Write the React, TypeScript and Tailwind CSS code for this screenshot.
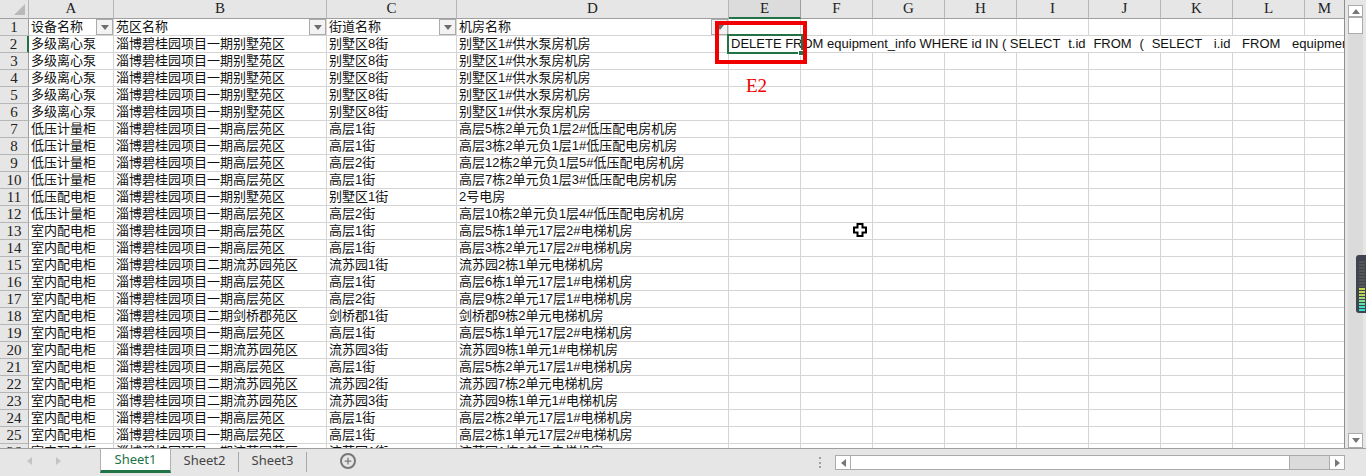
import { Plus } from "lucide-react";

const ONE = "淄博碧桂园项目一期";
const TWO = "淄博碧桂园项目二期";

// 每行: 设备, 苑区, 街道, 机房
const rows: [string, string, string, string][] = [
  ["设备名称", "苑区名称", "街道名称", "机房名称"],
  ["多级离心泵", ONE + "别墅苑区", "别墅区8街", "别墅区1#供水泵房机房"],
  ["多级离心泵", ONE + "别墅苑区", "别墅区8街", "别墅区1#供水泵房机房"],
  ["多级离心泵", ONE + "别墅苑区", "别墅区8街", "别墅区1#供水泵房机房"],
  ["多级离心泵", ONE + "别墅苑区", "别墅区8街", "别墅区1#供水泵房机房"],
  ["多级离心泵", ONE + "别墅苑区", "别墅区8街", "别墅区1#供水泵房机房"],
  ["低压计量柜", ONE + "高层苑区", "高层1街", "高层5栋2单元负1层2#低压配电房机房"],
  ["低压计量柜", ONE + "高层苑区", "高层1街", "高层3栋2单元负1层1#低压配电房机房"],
  ["低压计量柜", ONE + "高层苑区", "高层2街", "高层12栋2单元负1层5#低压配电房机房"],
  ["低压计量柜", ONE + "高层苑区", "高层1街", "高层7栋2单元负1层3#低压配电房机房"],
  ["低压配电柜", ONE + "别墅苑区", "别墅区1街", "2号电房"],
  ["低压计量柜", ONE + "高层苑区", "高层2街", "高层10栋2单元负1层4#低压配电房机房"],
  ["室内配电柜", ONE + "高层苑区", "高层1街", "高层5栋1单元17层2#电梯机房"],
  ["室内配电柜", ONE + "高层苑区", "高层1街", "高层3栋2单元17层2#电梯机房"],
  ["室内配电柜", TWO + "流苏园苑区", "流苏园1街", "流苏园2栋1单元电梯机房"],
  ["室内配电柜", ONE + "高层苑区", "高层1街", "高层6栋1单元17层1#电梯机房"],
  ["室内配电柜", ONE + "高层苑区", "高层2街", "高层9栋2单元17层1#电梯机房"],
  ["室内配电柜", TWO + "剑桥郡苑区", "剑桥郡1街", "剑桥郡9栋2单元电梯机房"],
  ["室内配电柜", ONE + "高层苑区", "高层1街", "高层5栋1单元17层2#电梯机房"],
  ["室内配电柜", TWO + "流苏园苑区", "流苏园3街", "流苏园9栋1单元1#电梯机房"],
  ["室内配电柜", ONE + "高层苑区", "高层1街", "高层5栋2单元17层1#电梯机房"],
  ["室内配电柜", TWO + "流苏园苑区", "流苏园2街", "流苏园7栋2单元电梯机房"],
  ["室内配电柜", TWO + "流苏园苑区", "流苏园3街", "流苏园9栋1单元1#电梯机房"],
  ["室内配电柜", ONE + "高层苑区", "高层1街", "高层2栋2单元17层1#电梯机房"],
  ["室内配电柜", ONE + "高层苑区", "高层1街", "高层2栋1单元17层2#电梯机房"],
  ["室内配电柜", ONE + "流苏园苑区", "流苏园1街", "流苏园1栋2单元电梯机房"],
];

const SQL_HEAD = "DELETE FROM equipment_info WHERE id IN ( SELECT";
const SQL_TAIL = "  t.id  FROM  (  SELECT   i.id   FROM   equipment_info i";

const emptyCols = ["w-[72px]", "w-[72px]", "w-[72px]", "w-[72px]", "w-[72px]", "w-[72px]", "w-[72px]", "w-[72px]", "w-[40px]"];

const meterBars = [
  "bg-[#555]", "bg-[#555]", "bg-[#555]", "bg-[#555]", "bg-[#555]", "bg-[#555]", "bg-[#555]", "bg-[#555]", "bg-[#555]",
  "bg-[#c8d84c]", "bg-[#c8d84c]", "bg-[#b4dc5a]", "bg-[#a0e070]", "bg-[#80e090]", "bg-[#60e0a8]", "bg-[#40e0c0]", "bg-[#30e0d0]",
];

function Triangle({ dir, className }: { dir: "up" | "down" | "left" | "right"; className?: string }) {
  const pts = { up: "0,5 8,5 4,0", down: "0,0 8,0 4,5", left: "5,0 5,8 0,4", right: "0,0 0,8 5,4" }[dir];
  const size = dir === "up" || dir === "down" ? { width: 8, height: 5 } : { width: 5, height: 8 };
  return (
    <svg {...size} className={className}>
      <polygon points={pts} fill="currentColor" />
    </svg>
  );
}

function ColHead({ label, className, active }: { label: string; className: string; active?: boolean }) {
  return (
    <div
      className={`flex h-[19px] shrink-0 items-center justify-center border-r pb-[1px] font-['Liberation_Serif'] text-[15px] text-[#222] ${className} ${
        active ? "border-b-2 border-r-[#9f9f9f] border-b-[#217346] bg-[#dcdcdc]" : "border-b border-r-[#b6b6b6] border-b-[#9f9f9f] bg-[#e6e6e6]"
      }`}
    >
      {label}
    </div>
  );
}

function Cell({ text, className, filter }: { text: string; className: string; filter?: boolean }) {
  return (
    <div className={`relative h-[17px] shrink-0 overflow-hidden whitespace-nowrap border-r border-b border-[#d4d4d4] pl-[2px] leading-[16px] ${className}`}>
      {text}
      {filter && (
        <div className="absolute right-0 top-0 flex h-[16px] w-[17px] items-center justify-center border border-[#ababab] bg-[#f3f3f3] text-[#6d6d6d]">
          <Triangle dir="down" />
        </div>
      )}
    </div>
  );
}

function Row({ index, data }: { index: number; data: [string, string, string, string] }) {
  const isHeader = index === 1;
  const isActive = index === 2;
  return (
    <div className="flex">
      <div
        className={`flex h-[17px] w-[29px] shrink-0 items-center justify-center border-b border-b-[#b6b6b6] bg-[#e6e6e6] font-['Liberation_Serif'] text-[15px] text-[#222] ${
          isActive ? "border-r-2 border-r-[#217346]" : "border-r border-r-[#9f9f9f]"
        }`}
      >
        {index}
      </div>
      <Cell text={data[0]} className="w-[85px]" filter={isHeader} />
      <Cell text={data[1]} className="w-[213px]" filter={isHeader} />
      <Cell text={data[2]} className="w-[130px]" filter={isHeader} />
      <Cell text={data[3]} className="w-[272px]" filter={isHeader} />
      {isActive ? (
        <div className="relative h-[17px] w-[616px] shrink-0 border-b border-[#d4d4d4]">
          {/* 溢出到右侧空单元格的 SQL */}
          <div className="absolute left-[2px] top-0 w-[614px] overflow-hidden whitespace-pre leading-[16px]">
            {SQL_HEAD}
            <span className="[word-spacing:0.3px]">{SQL_TAIL}</span>
          </div>
        </div>
      ) : (
        emptyCols.map((w, i) => (
          <div key={i} className={`h-[17px] shrink-0 border-b border-r border-[#d4d4d4] ${w}`} />
        ))
      )}
    </div>
  );
}

export default function App() {
  return (
    <div className="relative flex h-[476px] w-[1366px] flex-col overflow-hidden bg-[#e6e6e6] font-['Liberation_Sans','Noto_Sans_CJK_SC',sans-serif] text-[13px] text-[#111]">
      <div className="flex h-[449px] shrink-0 border-b border-[#9f9f9f]">
        {/* 表格 */}
        <div className="h-[448px] w-[1345px] shrink-0 overflow-hidden border-r border-[#8f8f8f] bg-white">
          <div className="flex">
            <div className="flex h-[19px] w-[29px] shrink-0 items-end justify-end border-r border-b border-r-[#b6b6b6] border-b-[#9f9f9f] bg-[#e6e6e6] pb-[3px] pr-[3px]">
              <svg width="11" height="11">
                <polygon points="11,0 11,11 0,11" fill="#b9b9b9" />
              </svg>
            </div>
            <ColHead label="A" className="w-[85px]" />
            <ColHead label="B" className="w-[213px]" />
            <ColHead label="C" className="w-[130px]" />
            <ColHead label="D" className="w-[272px]" />
            <ColHead label="E" className="w-[72px]" active />
            <ColHead label="F" className="w-[72px]" />
            <ColHead label="G" className="w-[72px]" />
            <ColHead label="H" className="w-[72px]" />
            <ColHead label="I" className="w-[72px]" />
            <ColHead label="J" className="w-[72px]" />
            <ColHead label="K" className="w-[72px]" />
            <ColHead label="L" className="w-[72px]" />
            <ColHead label="M" className="w-[40px]" />
          </div>
          {rows.map((r, i) => (
            <Row key={i} index={i + 1} data={r} />
          ))}
        </div>

        {/* 竖向滚动条 */}
        <div className="flex w-[21px] shrink-0 justify-center bg-[#e6e6e6] pt-[5px]">
          <div className="flex h-[443px] w-[15px] flex-col bg-[#dbdbdb]">
            <div className="flex h-[12px] items-center justify-center border border-[#ababab] bg-white text-[#777]">
              <Triangle dir="up" />
            </div>
            <div className="h-[17px] border border-[#ababab] bg-white" />
            <div className="flex-1" />
            <div className="flex h-[15px] items-center justify-center border border-[#ababab] bg-white text-[#777]">
              <Triangle dir="down" />
            </div>
          </div>
        </div>
      </div>

      {/* 工作表标签 */}
      <div className="flex h-[27px] items-start font-['Noto_Sans',sans-serif] text-[13px] text-[#444]">
        <div className="flex h-[24px] w-[100px] shrink-0 items-center gap-[24px] pl-[27px] text-[#c4c4c4]">
          <Triangle dir="left" />
          <Triangle dir="right" />
        </div>
        <div className="flex h-[24px] w-[71px] shrink-0 items-center justify-center border-x border-b-[3px] border-x-[#b0b0b0] border-b-[#217346] bg-white text-[#217346]">Sheet1</div>
        <div className="flex h-[24px] w-[67px] shrink-0 items-center justify-center">Sheet2</div>
        <div className="mt-[3px] h-[20px] w-px shrink-0 bg-[#a8a8a8]" />
        <div className="flex h-[24px] w-[67px] shrink-0 items-center justify-center">Sheet3</div>
        <div className="mt-[3px] h-[20px] w-px shrink-0 bg-[#a8a8a8]" />
        <div className="ml-[33px] mt-[4px] flex h-[16px] w-[16px] shrink-0 items-center justify-center rounded-full border-2 border-[#777] text-[#777]">
          <Plus size={10} strokeWidth={3} />
        </div>

        <div className="ml-[463px] mt-[8px] flex h-[11px] w-[2px] shrink-0 flex-col justify-between">
          <span className="h-[2px] bg-[#a0a0a0]" />
          <span className="h-[2px] bg-[#a0a0a0]" />
          <span className="h-[2px] bg-[#a0a0a0]" />
        </div>

        {/* 横向滚动条 */}
        <div className="ml-[14px] mt-[6px] flex h-[15px] w-[510px] shrink-0 border border-[#ababab] bg-[#dbdbdb]">
          <div className="flex w-[15px] shrink-0 items-center justify-center border-r border-[#ababab] bg-white text-[#777]">
            <Triangle dir="left" />
          </div>
          <div className="w-[439px] shrink-0 border-r border-[#ababab] bg-white" />
          <div className="flex-1" />
          <div className="flex w-[15px] shrink-0 items-center justify-center border-l border-[#ababab] bg-white text-[#777]">
            <Triangle dir="right" />
          </div>
        </div>
      </div>

      {/* 选中单元格 E2 */}
      <div className="absolute left-[727px] top-[34px] h-[20px] w-[76px] border-2 border-[#217346]" />
      <div className="absolute left-[798px] top-[50px] h-[6px] w-[6px] border border-white bg-[#217346]" />
      {/* 标注 */}
      <div className="absolute left-[715px] top-[21px] h-[43px] w-[92px] border-[4px] border-[#f00000]" />
      <div className="absolute left-[746px] top-[72px] font-['Liberation_Serif'] text-[19px] text-[#f00000]">E2</div>

      {/* 鼠标指针 */}
      <svg className="absolute left-[853px] top-[223px]" width="14" height="14" viewBox="0 0 14 14">
        <path d="M4.5 1 H9.5 V4.5 H13 V9.5 H9.5 V13 H4.5 V9.5 H1 V4.5 H4.5 Z" fill="#fff" stroke="#000" strokeWidth="2" />
      </svg>

      {/* 右侧悬浮音量条 */}
      <div className="absolute left-[1356px] top-[255px] flex h-[58px] w-[12px] flex-col items-center gap-[1px] rounded-[3px] bg-[#3f4450] pt-[6px]">
        {meterBars.map((c, i) => (
          <span key={i} className={`h-[2px] w-[6px] shrink-0 ${c}`} />
        ))}
      </div>
    </div>
  );
}
